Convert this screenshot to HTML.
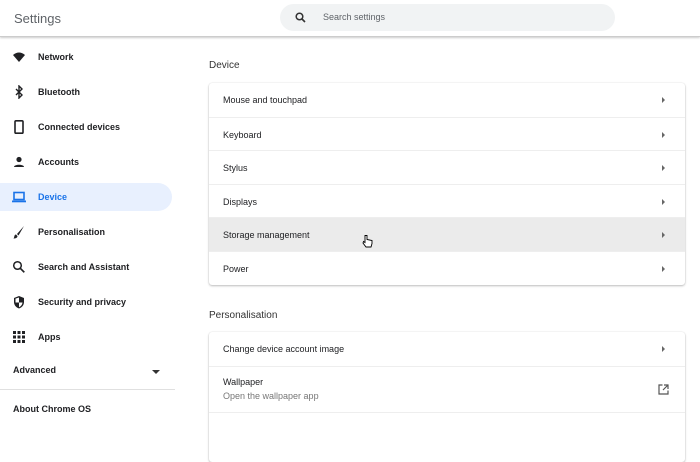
<!DOCTYPE html>
<html><head><style>
*{margin:0;padding:0;box-sizing:border-box}
body{width:700px;height:423px;overflow:hidden;background:#fff;font-family:"Liberation Sans",sans-serif;color:#202124;position:relative}
.hdr{position:absolute;left:0;top:0;width:700px;height:37px;background:#fff;border-bottom:1px solid #ccc;box-shadow:0 1px 2px rgba(0,0,0,.2)}
.title{position:absolute;left:14px;top:11px;font-size:13px;color:#5f6368}
.search{position:absolute;left:280px;top:4px;width:335px;height:27px;background:#f1f3f4;border-radius:14px}
.search span{position:absolute;left:43px;top:8px;font-size:9px;color:#5f6368}
.side{position:absolute;left:0;top:38px;width:176px}
.it{position:absolute;left:0;width:172px;height:28px;font-size:9px;font-weight:bold;color:#202124}
.it span{position:absolute;left:38px;top:9px}
.it svg{position:absolute;left:12px;top:7px}
.sel{background:#e8f0fe;border-radius:0 14px 14px 0;color:#1a73e8}
.h2{position:absolute;left:209px;font-size:10px;color:#333}
.card{position:absolute;left:209px;width:476px;background:#fff;border-radius:3px;box-shadow:0 1px 2px rgba(0,0,0,.25),0 0 1px rgba(0,0,0,.15)}
.row{position:relative;height:33.6px;border-top:1px solid #eee;font-size:9px}
.row:first-child{border-top:none}
.row span{position:absolute;left:14px;top:12px}
.row i{position:absolute;left:453px;top:14px;width:0;height:0;border-left:3px solid #666;border-top:3px solid transparent;border-bottom:3px solid transparent}
</style></head><body>
<div class="hdr"><div class="title">Settings</div>
<div class="search"><svg style="position:absolute;left:15px;top:8px" width="11" height="11" viewBox="0 0 11 11"><circle cx="4.5" cy="4.5" r="3.3" fill="none" stroke="#333" stroke-width="1.5"/><path d="M7 7l3 3" stroke="#333" stroke-width="1.6"/></svg><span>Search settings</span></div></div>
<div class="side">
<div class="it" style="top:5px"><svg width="14" height="14" viewBox="0 0 14 14"><path d="M1 5Q7 0 13 5L7 12Z" fill="#202124"/></svg><span>Network</span></div>
<div class="it" style="top:40px"><svg width="14" height="14" viewBox="0 0 14 14"><path d="M4 4l6 6-3 3V1l3 3-6 6" fill="none" stroke="#202124" stroke-width="1.4"/></svg><span>Bluetooth</span></div>
<div class="it" style="top:75px"><svg width="14" height="14" viewBox="0 0 14 14"><rect x="3" y="0.8" width="8" height="12.4" rx="1" fill="none" stroke="#202124" stroke-width="1.6"/></svg><span>Connected devices</span></div>
<div class="it" style="top:110px"><svg width="14" height="14" viewBox="0 0 14 14"><circle cx="7" cy="4.5" r="2.6" fill="#202124"/><path d="M2 12c0-3 10-3 10 0z" fill="#202124"/></svg><span>Accounts</span></div>
<div class="it sel" style="top:145px"><svg width="14" height="14" viewBox="0 0 14 14"><rect x="2" y="2.5" width="10" height="7" fill="none" stroke="#1a73e8" stroke-width="1.6"/><rect x="0" y="10.5" width="14" height="1.8" fill="#1a73e8"/></svg><span>Device</span></div>
<div class="it" style="top:180px"><svg width="14" height="14" viewBox="0 0 14 14"><path d="M12 1L5 9l1.5 1.5z" fill="#202124"/><path d="M4 9.5l1.5 1.5c0 2-2 2.5-4 2.5 1-1 .5-4 2.5-4z" fill="#202124"/></svg><span>Personalisation</span></div>
<div class="it" style="top:215px"><svg width="14" height="14" viewBox="0 0 14 14"><circle cx="5.5" cy="5.5" r="3.8" fill="none" stroke="#202124" stroke-width="1.5"/><path d="M8.3 8.3l4 4" stroke="#202124" stroke-width="1.7"/></svg><span>Search and Assistant</span></div>
<div class="it" style="top:250px"><svg width="14" height="14" viewBox="0 0 14 14"><path d="M7 1l5 2v4c0 3-2 5.5-5 6.5C4 12.5 2 10 2 7V3z" fill="#202124"/><path d="M7 2.5v5H3.5V3.6zM7 7.5h3.5c-.3 2.3-1.8 4-3.5 4.7z" fill="#fff"/></svg><span>Security and privacy</span></div>
<div class="it" style="top:285px"><svg width="14" height="14" viewBox="0 0 14 14" fill="#202124"><rect x="1" y="1" width="3" height="3"/><rect x="5.5" y="1" width="3" height="3"/><rect x="10" y="1" width="3" height="3"/><rect x="1" y="5.5" width="3" height="3"/><rect x="5.5" y="5.5" width="3" height="3"/><rect x="10" y="5.5" width="3" height="3"/><rect x="1" y="10" width="3" height="3"/><rect x="5.5" y="10" width="3" height="3"/><rect x="10" y="10" width="3" height="3"/></svg><span>Apps</span></div>
<div class="it" style="top:318px"><span style="left:13px">Advanced</span><i style="position:absolute;left:152px;top:14px;border-top:4px solid #333;border-left:4px solid transparent;border-right:4px solid transparent"></i></div>
<div style="position:absolute;left:0;top:351px;width:175px;border-top:1px solid #e0e0e0"></div>
<div class="it" style="top:357px"><span style="left:13px">About Chrome OS</span></div>
</div>
<div class="h2" style="top:60px">Device</div>
<div class="card" style="top:83px">
<div class="row"><span>Mouse and touchpad</span><i></i></div>
<div class="row"><span>Keyboard</span><i></i></div>
<div class="row"><span>Stylus</span><i></i></div>
<div class="row"><span>Displays</span><i></i></div>
<div class="row" style="background:#ebebeb"><span>Storage management</span><i></i></div>
<div class="row"><span>Power</span><i></i></div>
</div>
<div class="h2" style="top:310px">Personalisation</div>
<div class="card" style="top:332px;height:130px">
<div class="row"><span>Change device account image</span><i></i></div>
<div class="row" style="height:46px"><span style="top:10px">Wallpaper</span><span style="top:24px;color:#777">Open the wallpaper app</span>
<svg style="position:absolute;left:449px;top:17px" width="11" height="11" viewBox="0 0 11 11"><path d="M4.5 1H1v9h9V6.5M6 1h4v4M10 1L5 6" fill="none" stroke="#555" stroke-width="1.2"/></svg></div>
<div class="row"></div>
</div>
<svg style="position:absolute;left:362px;top:234px" width="11" height="14" viewBox="0 0 11 14"><path d="M3 1.5v7L1.5 7.5 1 9l3 4h5l1-3.5V6.5L5 5.5V1.5z" fill="#fff" stroke="#000" stroke-width="0.9"/></svg>
</body></html>
